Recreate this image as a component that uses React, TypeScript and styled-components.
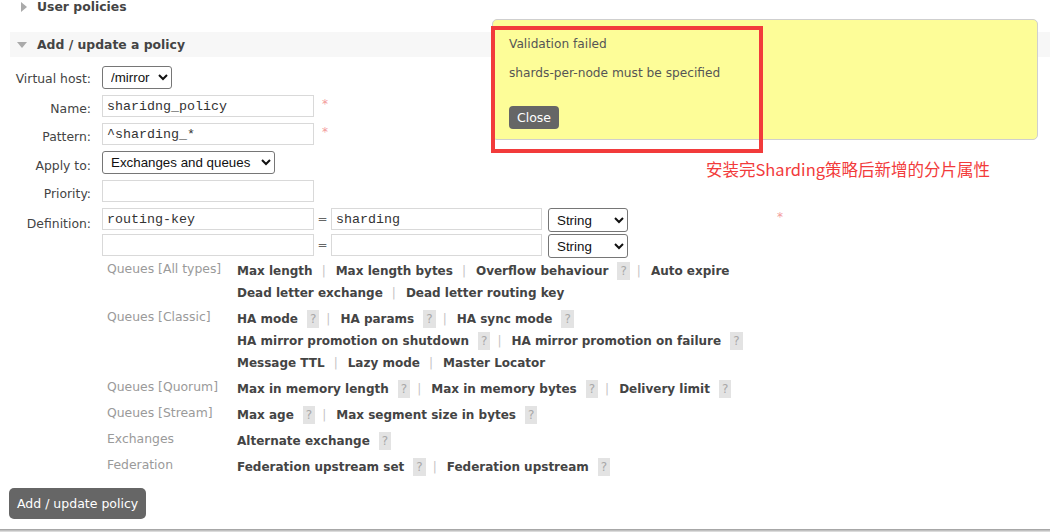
import React from 'react';
import styled, { createGlobalStyle } from 'styled-components';

const Global = createGlobalStyle`
  html, body { margin: 0; padding: 0; background: #fff; }
  body {
    font-family: "DejaVu Sans", Verdana, sans-serif;
    font-size: 12px;
    color: #484848;
  }
`;

const Page = styled.div`
  position: relative;
  width: 1050px;
  height: 532px;
  overflow: hidden;
  display: flex;
  flex-direction: column;
`;

const Main = styled.div`
  flex: 1;
  margin-top: -6px;
`;

const SectionHeader = styled.div<{ $bg?: boolean; $gap?: number }>`
  display: flex;
  align-items: center;
  gap: 10px;
  height: 25px;
  margin-left: 10px;
  margin-top: ${p => p.$gap ?? 0}px;
  padding-left: 7px;
  background: ${p => (p.$bg ? '#f7f7f7' : 'transparent')};
  font-weight: bold;
  font-size: 12.4px;
  color: #444;
`;

const TriBox = styled.span`
  width: 10px;
  display: flex;
  justify-content: flex-end;
`;

const TriDown = styled.span`
  width: 0;
  height: 0;
  border-left: 5px solid transparent;
  border-right: 5px solid transparent;
  border-top: 6px solid #aaa;
`;

const TriRight = styled.span`
  width: 0;
  height: 0;
  border-top: 5px solid transparent;
  border-bottom: 5px solid transparent;
  border-left: 6px solid #aaa;
`;

const Form = styled.div`
  display: grid;
  grid-template-columns: 91px auto;
  column-gap: 11px;
  margin-top: 6px;
`;

const Label = styled.div<{ $pt?: number }>`
  text-align: right;
  color: #444;
  font-size: 12.4px;
  line-height: 15px;
  align-self: start;
  padding-top: ${p => p.$pt ?? 9}px;
  white-space: nowrap;
`;

const Field = styled.div`
  display: flex;
  align-items: flex-start;
  padding: 3px 0;
`;

const TextInput = styled.input`
  box-sizing: border-box;
  width: ${p => (p.width ? `${p.width}px` : '212px')};
  height: 22px;
  border: 1px solid #d9d9d9;
  padding: 0 4px;
  margin: 0;
  font-family: "Liberation Mono", "Courier New", monospace;
  font-size: 13.33px;
  color: #333;
  background: #fff;
  outline: none;
`;

const Select = styled.select<{ $w: number; $h?: number; $ml?: number }>`
  box-sizing: border-box;
  width: ${p => p.$w}px;
  height: ${p => p.$h ?? 23}px;
  margin: 0 0 0 ${p => p.$ml ?? 0}px;
  font-family: "Liberation Sans", Arial, sans-serif;
  font-size: 13.33px;
  color: #111;
  border: 1px solid #767676;
  border-radius: 3px;
  background: #fff;
  padding: 0 2px 0 4px;
`;

const Required = styled.span`
  color: #f39a9a;
  font-size: 12px;
  margin-left: 8px;
  line-height: 18px;
`;

const DefBlock = styled.div`
  width: 667px;
  display: flex;
  flex-direction: column;
  gap: 3px;
`;

const DefRow = styled.div`
  display: flex;
  align-items: flex-start;
  height: 23px;
`;

const Eq = styled.span`
  width: 17px;
  text-align: center;
  line-height: 22px;
  color: #666;
`;

const Help = styled.div`
  padding-left: 5px;
  margin-top: -2px;
`;

const HelpGroup = styled.div`
  display: grid;
  grid-template-columns: 130px auto;
  padding: 2px 0;
`;

const HelpLabel = styled.div`
  color: #9a9a9a;
  font-size: 12.4px;
  line-height: 22px;
  margin-top: -2px;
  white-space: nowrap;
`;

const HelpLines = styled.div`
  display: flex;
  flex-direction: column;
`;

const HelpLine = styled.div`
  display: flex;
  align-items: center;
  height: 22px;
  white-space: nowrap;
`;

const Link = styled.span`
  font-weight: bold;
  font-size: 12px;
  color: #444;
`;

const Sep = styled.span<{ $afterBadge?: boolean }>`
  color: #c4c4c4;
  margin: 0 10px 0 ${p => (p.$afterBadge ? 7 : 9)}px;
`;

const Badge = styled.span`
  display: inline-block;
  background: #e3e3e3;
  color: #a8a8a8;
  line-height: 18px;
  padding: 0 3px;
  margin-left: 9px;
  font-size: 12px;
`;

const SubmitRow = styled.div`
  margin: 5px 0 0 9px;
`;

const Button = styled.button<{ $size?: number }>`
  background: #666;
  color: #fff;
  border: none;
  border-radius: 5px;
  font-family: "DejaVu Sans", Verdana, sans-serif;
  font-size: ${p => p.$size ?? 12.5}px;
  cursor: pointer;
  margin: 0;
`;

const MainButton = styled(Button)`
  height: 31px;
  padding: 0 8px;
`;

const Footer = styled.div`
  height: 3px;
  background: linear-gradient(#9a9a9a, #e8e8e8);
`;

const Popup = styled.div`
  position: absolute;
  left: 492px;
  top: 19px;
  width: 546px;
  height: 121px;
  box-sizing: border-box;
  background: #fdfd98;
  border: 1px solid #cfcfcf;
  border-radius: 5px;
  padding: 17px 16px;
  color: #555;
  font-size: 12.2px;
`;

const PopupText = styled.p<{ $mb: number }>`
  margin: 0 0 ${p => p.$mb}px 0;
  line-height: 15px;
`;

const CloseButton = styled(Button)`
  height: 23px;
  padding: 0 8px;
  font-size: 12.5px;
  border-radius: 4px;
`;

const Annotation = styled.div`
  position: absolute;
  left: 491px;
  top: 26px;
  width: 272px;
  height: 127px;
  box-sizing: border-box;
  border: 4px solid #f23b3b;
  pointer-events: none;
`;

const AnnotationText = styled.div`
  position: absolute;
  left: 706px;
  top: 158px;
  font-family: "Noto Sans CJK SC", sans-serif;
  font-size: 16.5px;
  line-height: 22px;
  color: #f23b3b;
  white-space: nowrap;
`;

type Item = { t: string; q?: boolean };
type Group = { label: string; lines: Item[][] };

const groups: Group[] = [
  {
    label: 'Queues [All types]',
    lines: [
      [{ t: 'Max length' }, { t: 'Max length bytes' }, { t: 'Overflow behaviour', q: true }, { t: 'Auto expire' }],
      [{ t: 'Dead letter exchange' }, { t: 'Dead letter routing key' }],
    ],
  },
  {
    label: 'Queues [Classic]',
    lines: [
      [{ t: 'HA mode', q: true }, { t: 'HA params', q: true }, { t: 'HA sync mode', q: true }],
      [{ t: 'HA mirror promotion on shutdown', q: true }, { t: 'HA mirror promotion on failure', q: true }],
      [{ t: 'Message TTL' }, { t: 'Lazy mode' }, { t: 'Master Locator' }],
    ],
  },
  {
    label: 'Queues [Quorum]',
    lines: [[{ t: 'Max in memory length', q: true }, { t: 'Max in memory bytes', q: true }, { t: 'Delivery limit', q: true }]],
  },
  {
    label: 'Queues [Stream]',
    lines: [[{ t: 'Max age', q: true }, { t: 'Max segment size in bytes', q: true }]],
  },
  { label: 'Exchanges', lines: [[{ t: 'Alternate exchange', q: true }]] },
  {
    label: 'Federation',
    lines: [[{ t: 'Federation upstream set', q: true }, { t: 'Federation upstream', q: true }]],
  },
];

export default function App() {
  return (
    <Page>
      <Global />
      <Main>
        <SectionHeader>
          <TriBox>
            <TriRight />
          </TriBox>
          User policies
        </SectionHeader>
        <SectionHeader $bg $gap={13}>
          <TriBox>
            <TriDown />
          </TriBox>
          Add / update a policy
        </SectionHeader>
        <Form>
          <Label $pt={8}>Virtual host:</Label>
          <Field>
            <Select $w={70} defaultValue="/mirror">
              <option>/mirror</option>
            </Select>
          </Field>

          <Label>Name:</Label>
          <Field>
            <TextInput defaultValue="sharidng_policy" />
            <Required>*</Required>
          </Field>

          <Label>Pattern:</Label>
          <Field>
            <TextInput defaultValue="^sharding_*" />
            <Required>*</Required>
          </Field>

          <Label $pt={10}>Apply to:</Label>
          <Field>
            <Select $w={173} defaultValue="Exchanges and queues">
              <option>Exchanges and queues</option>
            </Select>
          </Field>

          <Label>Priority:</Label>
          <Field>
            <TextInput defaultValue="" />
          </Field>

          <Label $pt={11}>Definition:</Label>
          <Field>
            <DefBlock>
              <DefRow>
                <TextInput defaultValue="routing-key" />
                <Eq>=</Eq>
                <TextInput width={211} defaultValue="sharding" />
                <Select $w={80} $h={24} $ml={6} defaultValue="String">
                  <option>String</option>
                </Select>
              </DefRow>
              <DefRow>
                <TextInput defaultValue="" />
                <Eq>=</Eq>
                <TextInput width={211} defaultValue="" />
                <Select $w={80} $h={24} $ml={6} defaultValue="String">
                  <option>String</option>
                </Select>
              </DefRow>
              <Help>
                {groups.map(g => (
                  <HelpGroup key={g.label}>
                    <HelpLabel>{g.label}</HelpLabel>
                    <HelpLines>
                      {g.lines.map((line, li) => (
                        <HelpLine key={li}>
                          {line.map((it, i) => (
                            <React.Fragment key={it.t}>
                              {i > 0 && <Sep $afterBadge={!!line[i - 1].q}>|</Sep>}
                              <Link>{it.t}</Link>
                              {it.q && <Badge>?</Badge>}
                            </React.Fragment>
                          ))}
                        </HelpLine>
                      ))}
                    </HelpLines>
                  </HelpGroup>
                ))}
              </Help>
            </DefBlock>
            <Required>*</Required>
          </Field>
        </Form>
        <SubmitRow>
          <MainButton>Add / update policy</MainButton>
        </SubmitRow>
      </Main>
      <Footer />

      <Popup>
        <PopupText $mb={14}>Validation failed</PopupText>
        <PopupText $mb={25}>shards-per-node must be specified</PopupText>
        <CloseButton>Close</CloseButton>
      </Popup>
      <Annotation />
      <AnnotationText>安装完Sharding策略后新增的分片属性</AnnotationText>
    </Page>
  );
}
